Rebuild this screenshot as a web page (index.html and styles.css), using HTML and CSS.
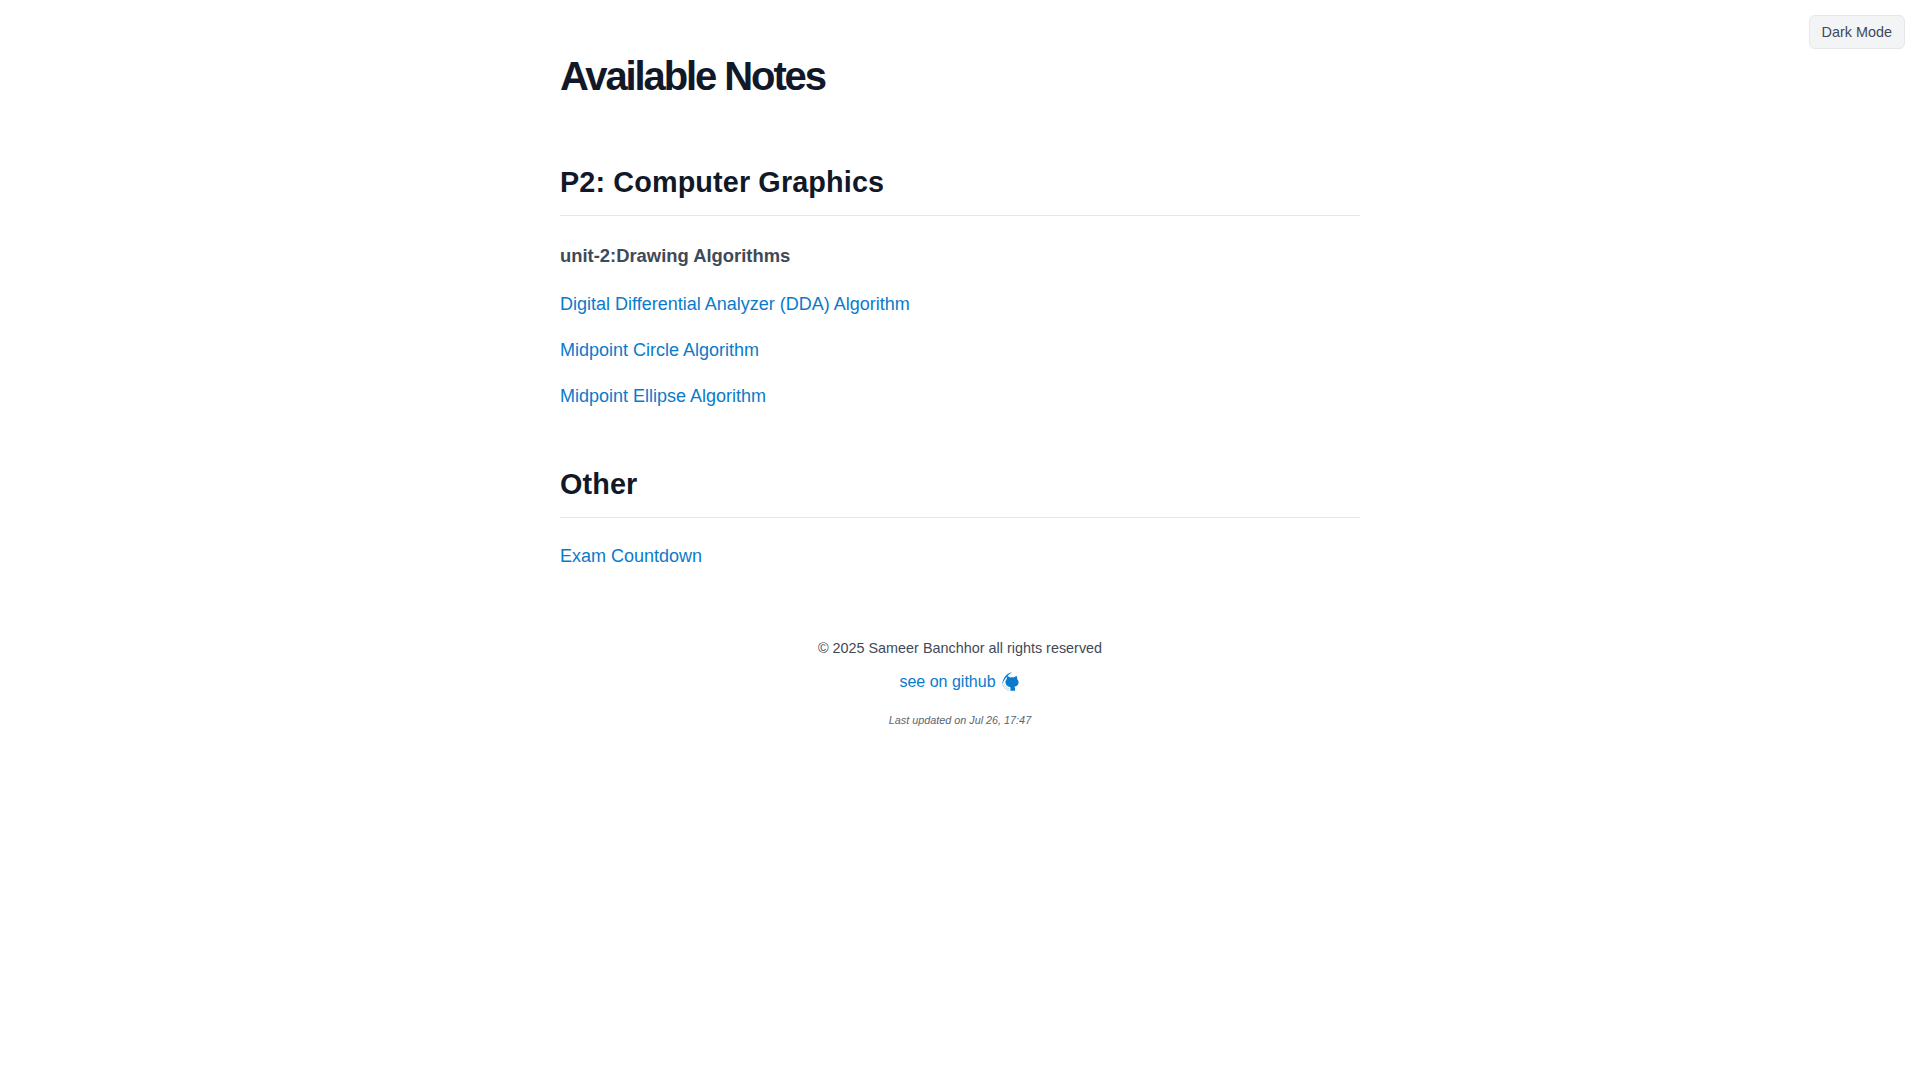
FILE: index.html
```html
<!DOCTYPE html>
<html lang="en">
<head>
  <meta charset="UTF-8">
  <title>Available Notes</title>
  <link rel="stylesheet" href="styles.css">
</head>
<body>
  <button class="theme-toggle">Dark Mode</button>
  <main class="container">
    <h1>Available Notes</h1>

    <section class="subject">
      <h2>P2: Computer Graphics</h2>
      <h3>unit-2:Drawing Algorithms</h3>
      <ul class="note-list">
        <li><a href="#">Digital Differential Analyzer (DDA) Algorithm</a></li>
        <li><a href="#">Midpoint Circle Algorithm</a></li>
        <li><a href="#">Midpoint Ellipse Algorithm</a></li>
      </ul>
    </section>

    <section class="subject">
      <h2>Other</h2>
      <ul class="note-list">
        <li><a href="#">Exam Countdown</a></li>
      </ul>
    </section>

    <footer class="footer">
      <p>© 2025 Sameer Banchhor all rights reserved</p>
      <p class="repo-line">
        <a href="#">see on github</a>
        <svg class="gh-icon" viewBox="0 0 16 16" width="20" height="20" aria-hidden="true">
          <path d="M8.8 .2C4.8 .8 1.6 4.2 .8 10.4 2.2 6.2 5 2.4 8.8 .2z"/>
          <path class="gh-fade" d="M1.2 10C2 12.2 4 14.2 6.5 14.8"/>
          <path class="gh-fade" d="M2.6 9.8C3.2 11.4 4.6 12.8 6.6 13.4"/>
          <path transform="translate(.4 -.5) scale(1.05 1)" d="M4.4 3.6C5.4 4 6.1 4.4 6.6 4.8 7.5 4.6 8.5 4.6 9.4 4.8 10.4 4.1 11.2 3.9 11.7 3.9 12 4.7 12.1 5.4 11.9 6 12.6 6.7 13 7.6 13 8.6 13 10.8 11.6 12 9.7 12.3 10.1 12.7 10.3 13.2 10.3 13.9V15.4H6.8V12.6C4.4 12 3 10.8 3 8.6 3 7.6 3.4 6.7 4.1 6 3.9 5.3 4 4.5 4.4 3.6z"/>
        </svg>
      </p>
      <p class="updated">Last updated on Jul 26, 17:47</p>
    </footer>
  </main>
</body>
</html>
```

FILE: styles.css
```css
body {
  margin: 0;
  background-color: #ffffff;
  color: #3f4958;
  font-family: "Liberation Sans", Arial, sans-serif;
  font-size: 18px;
  line-height: 1.6;
}
.theme-toggle {
  position: absolute;
  top: 15px;
  right: 15px;
  padding: 8px 12px;
  background-color: #f3f4f6;
  color: #3f4958;
  border: 1px solid #e5e7eb;
  border-radius: 6px;
  font-family: inherit;
  font-size: 14.4px;
  line-height: 16px;
}
.container {
  width: 800px;
  margin: 0 auto;
}
h1 {
  margin: 0 0 55px;
  padding-top: 48px;
  color: #111827;
  font-size: 40px;
  line-height: 56px;
  letter-spacing: -2.1px;
}
h2 {
  margin: 0;
  padding-bottom: 10px;
  border-bottom: 1px solid #e5e7eb;
  color: #111827;
  font-size: 28.8px;
  line-height: 46px;
  letter-spacing: .12px;
}
h3 {
  margin: 24px 0 0;
  font-size: 18.4px;
  line-height: 32px;
}
h3 + .note-list {
  padding-top: 1px;
}
h2 + .note-list {
  padding-top: 7px;
}
.subject {
  margin-bottom: 50px;
}
.note-list {
  list-style: none;
  margin: 0;
  padding: 0;
}
.note-list li {
  margin-top: 17px;
  line-height: 29px;
}
.note-list a, .repo-line a {
  color: #0a7acc;
  text-decoration: none;
}
.footer {
  margin-top: 66px;
  text-align: center;
  font-size: 14.4px;
}
.footer p {
  margin: 0;
}
.repo-line {
  display: flex;
  justify-content: center;
  align-items: center;
  gap: 5px;
  margin-top: 9px !important;
  font-size: 16px;
}
.gh-icon {
  fill: #0a7acc;
}
.gh-fade {
  fill: none;
  stroke: #0a7acc;
  stroke-width: .7;
  opacity: .35;
}
.updated {
  margin-top: 17px !important;
  color: #5b6472;
  font-size: 10.8px;
  font-style: italic;
}
```
